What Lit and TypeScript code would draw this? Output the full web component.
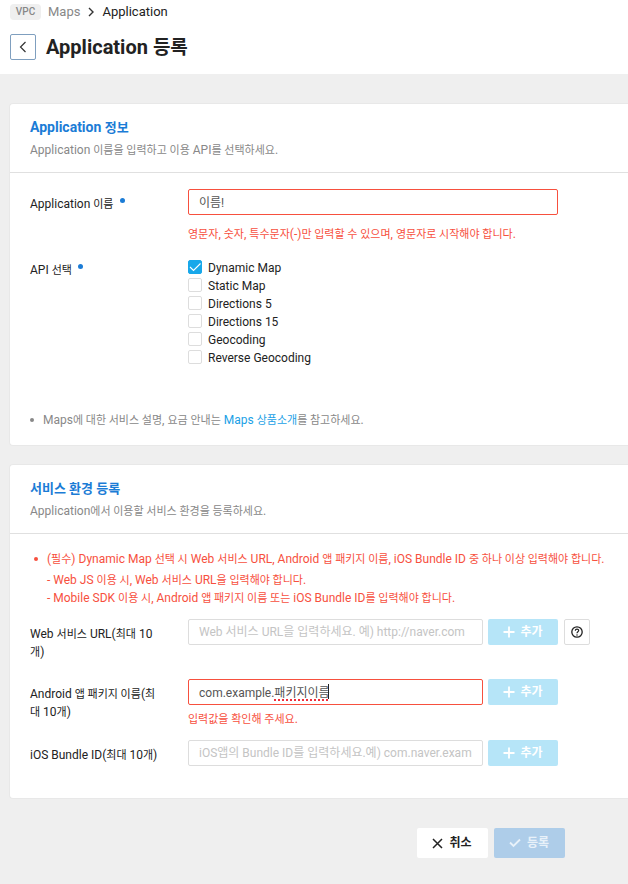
import { LitElement, html, css, svg, nothing } from "lit";
import { customElement, state } from "lit/decorators.js";
import { classMap } from "lit/directives/class-map.js";

interface EnvRow {
  id: string;
  label: string;
  placeholder: string;
  value: string;
  error?: string;
  help?: boolean;
  composing?: boolean;
}

// Hangul is set one step smaller than the Latin text beside it.
const mixed = (text: string) =>
  text
    .split(/([가-힣]+(?: +[가-힣]+)*)/)
    .filter((part) => part !== "")
    .map((part) => (/[가-힣]/.test(part) ? html`<span class="ko">${part}</span>` : part));

const plusIcon = svg`<svg class="icon" width="12" height="12" viewBox="0 0 12 12" aria-hidden="true"><path d="M6 0.5V11.5M0.5 6H11.5" fill="none" stroke="currentColor" stroke-width="1.8"/></svg>`;

@customElement("app-root")
export class AppRoot extends LitElement {
  @state() private apis = [
    { name: "Dynamic Map", checked: true },
    { name: "Static Map", checked: false },
    { name: "Directions 5", checked: false },
    { name: "Directions 15", checked: false },
    { name: "Geocoding", checked: false },
    { name: "Reverse Geocoding", checked: false },
  ];

  private rows: EnvRow[] = [
    {
      id: "web-url",
      label: "Web 서비스 URL(최대 10개)",
      placeholder: "Web 서비스 URL을 입력하세요. 예) http://naver.com",
      value: "",
      help: true,
    },
    {
      id: "android-package",
      label: "Android 앱 패키지 이름(최대 10개)",
      placeholder: "",
      value: "com.example.패키지이름",
      error: "입력값을 확인해 주세요.",
      composing: true,
    },
    {
      id: "ios-bundle",
      label: "iOS Bundle ID(최대 10개)",
      placeholder: "iOS앱의 Bundle ID를 입력하세요.예) com.naver.example",
      value: "",
    },
  ];

  static styles = css`
    :host {
      display: block;
      min-height: 100vh;
      background: #efefef;
      color: #222;
      font-family: Roboto, "Noto Sans CJK KR", sans-serif;
      font-size: 12px;
      line-height: 18px;
    }
    * {
      box-sizing: border-box;
    }
    h1, h2, p, ul {
      margin: 0;
      padding: 0;
    }
    ul {
      list-style: none;
    }
    button, input {
      font: inherit;
    }
    a {
      text-decoration: none;
    }
    .ko {
      font-size: 11px;
      line-height: 1;
    }
    .icon {
      display: block;
      flex: none;
    }
    .header {
      background: #fff;
      padding: 3px 10px 13px;
    }
    .crumbs {
      display: flex;
      align-items: center;
      gap: 7px;
      font-size: 13px;
    }
    .crumbs a {
      color: #888;
    }
    .tag {
      width: 31px;
      height: 16px;
      border-radius: 4px;
      background: #efefef;
      color: #888;
      font-size: 10px;
      font-weight: 500;
      line-height: 16px;
      text-align: center;
    }
    .heading {
      display: flex;
      align-items: center;
      gap: 10px;
      margin-top: 12px;
      height: 28px;
    }
    .heading h1 {
      font-size: 20px;
      line-height: 28px;
      font-weight: 700;
    }
    .heading .ko {
      font-size: 19px;
    }
    .back {
      display: grid;
      place-items: center;
      width: 26px;
      height: 26px;
      padding: 0;
      border: 1px solid #7f9fbf;
      border-radius: 2px;
      background: #fff;
      color: #333;
    }
    .main {
      display: flex;
      flex-direction: column;
      gap: 18px;
      padding: 29px 0 26px 9px;
    }
    .card {
      background: #fff;
      border: 1px solid #e8e8e8;
      border-right: 0;
      border-radius: 4px 0 0 4px;
    }
    .card-head {
      padding: 14px 20px 13px;
      border-bottom: 1px solid #e0e0e0;
    }
    .card-head h2 {
      color: #1b7cd6;
      font-size: 14px;
      line-height: 18px;
      font-weight: 700;
    }
    .card-head h2 .ko {
      font-size: 13px;
    }
    .card-head p {
      margin-top: 5px;
      color: #888;
    }
    .card-body {
      padding: 16px 8px 16px 20px;
    }
    .field {
      display: grid;
      grid-template-columns: 130px minmax(0, 370px);
      column-gap: 28px;
      align-items: start;
    }
    .field-label {
      padding-top: 6px;
    }
    .apis .field-label {
      padding-top: 4px;
    }
    .required::after {
      content: "";
      display: inline-block;
      width: 5px;
      height: 5px;
      margin-left: 6px;
      border-radius: 50%;
      background: #1b7cd6;
      vertical-align: 5px;
    }
    .text {
      display: block;
      width: 100%;
      height: 26px;
      padding: 0 10px 2px;
      border: 1px solid #ddd;
      border-radius: 2px;
      background: #fff;
      color: #555;
      outline: 0;
    }
    .text:placeholder-shown {
      padding-bottom: 0;
    }
    .text::placeholder {
      color: #c4c4c4;
      opacity: 1;
    }
    .text.invalid {
      padding-bottom: 2px;
      border-color: #f7503e;
    }
    .error {
      color: #f7503e;
    }
    .name-error {
      margin-top: 10px;
    }
    .apis {
      margin-top: 14px;
    }
    .api-list {
      padding-top: 2px;
    }
    .api {
      display: flex;
      align-items: center;
      gap: 6px;
      height: 18px;
    }
    .check {
      position: relative;
      display: block;
      width: 14px;
      height: 14px;
      margin-bottom: 2px;
    }
    .check input {
      appearance: none;
      display: block;
      width: 14px;
      height: 14px;
      margin: 0;
      border: 1px solid #ddd;
      border-radius: 2px;
      background: #fff;
    }
    .check input:checked {
      border-color: #18a8ea;
      background: #18a8ea;
    }
    .check svg {
      position: absolute;
      inset: 0;
      pointer-events: none;
      color: #fff;
    }
    .note {
      display: flex;
      margin-top: 44px;
      color: #888;
    }
    .bullet {
      flex: none;
      width: 4px;
      height: 4px;
      margin: 7px 9px 0 0;
      border-radius: 50%;
      background: currentColor;
    }
    .note a {
      color: #1b9fe6;
    }
    .notice {
      display: flex;
      padding-left: 4px;
      color: #f7503e;
    }
    .notice ul {
      margin-top: 3px;
    }
    .envs {
      margin-top: 12px;
    }
    .env {
      display: grid;
      grid-template-columns: 153px minmax(0, 295px) 70px 27px;
      column-gap: 5px;
      align-items: start;
      min-height: 60px;
      padding-bottom: 12px;
    }
    .env:last-child {
      min-height: 42px;
    }
    .env-label {
      max-width: 132px;
      padding-top: 6px;
    }
    .entry {
      position: relative;
    }
    .entry .error {
      margin-top: 5px;
    }
    .composing {
      position: absolute;
      left: 86px;
      top: 5px;
      width: 55px;
      height: 15px;
      border-right: 1px solid #222;
      pointer-events: none;
    }
    .composing::after {
      content: "";
      display: block;
      height: 15px;
      border-bottom: 2px dotted #f0303c;
    }
    .add {
      display: flex;
      align-items: center;
      justify-content: center;
      gap: 5px;
      height: 26px;
      padding: 0;
      border: 0;
      border-radius: 2px;
      background: #b6e5f8;
      color: #fff;
      font-weight: 700;
    }
    .help {
      display: grid;
      place-items: center;
      justify-self: end;
      width: 26px;
      height: 26px;
      padding: 0;
      border: 1px solid #ddd;
      border-radius: 2px;
      background: #fff;
      color: #222;
    }
    .actions {
      display: flex;
      justify-content: center;
      gap: 6px;
      padding: 11px 0 0 344px;
    }
    .action {
      display: flex;
      align-items: center;
      justify-content: center;
      gap: 6px;
      width: 71px;
      height: 30px;
      padding: 0;
      border: 0;
      border-radius: 2px;
      background: #fff;
      color: #222;
      font-weight: 700;
    }
    .primary {
      background: #aecde9;
      color: #e8f1f9;
    }
  `;

  private toggle(index: number) {
    this.apis = this.apis.map((a, i) => (i === index ? { ...a, checked: !a.checked } : a));
  }

  private renderEnv(row: EnvRow) {
    return html`
      <div class="env">
        <label class="env-label" for=${row.id}>${mixed(row.label)}</label>
        <div class="entry">
          <input
            id=${row.id}
            type="text"
            class=${classMap({ text: true, invalid: !!row.error })}
            placeholder=${row.placeholder}
            .value=${row.value}
            spellcheck="false"
          />
          ${row.composing ? html`<span class="composing" aria-hidden="true"></span>` : nothing}
          ${row.error ? html`<p class="error">${mixed(row.error)}</p>` : nothing}
        </div>
        <button class="add" type="button" disabled>${plusIcon}<span>추가</span></button>
        ${row.help
          ? html`<button class="help" type="button" aria-label="도움말">
              <svg class="icon" width="12" height="12" viewBox="0 0 12 12" aria-hidden="true">
                <circle cx="6" cy="6" r="5.2" fill="none" stroke="currentColor" stroke-width="1.3" />
                <path d="M4.3 4.8C4.3 2.5 7.7 2.6 7.7 4.6C7.7 5.8 6 5.9 6 7.3" fill="none" stroke="currentColor" stroke-width="1.2" />
                <circle cx="6" cy="8.9" r="0.75" fill="currentColor" />
              </svg>
            </button>`
          : nothing}
      </div>
    `;
  }

  render() {
    return html`
      <header class="header">
        <nav class="crumbs">
          <span class="tag">VPC</span>
          <a href="#">Maps</a>
          <svg class="icon" width="8" height="10" viewBox="0 0 8 10" aria-hidden="true">
            <path d="M2 1L6 5L2 9" fill="none" stroke="#333" stroke-width="1.4" />
          </svg>
          <span>Application</span>
        </nav>
        <div class="heading">
          <button class="back" type="button" aria-label="뒤로">
            <svg class="icon" width="8" height="12" viewBox="0 0 8 12" aria-hidden="true">
              <path d="M6.5 1L1.5 6L6.5 11" fill="none" stroke="currentColor" stroke-width="1.2" />
            </svg>
          </button>
          <h1>${mixed("Application 등록")}</h1>
        </div>
      </header>
      <main class="main">
        <section class="card">
          <div class="card-head">
            <h2>${mixed("Application 정보")}</h2>
            <p>${mixed("Application 이름을 입력하고 이용 API를 선택하세요.")}</p>
          </div>
          <div class="card-body">
            <div class="field">
              <label class="field-label required" for="app-name">${mixed("Application 이름")}</label>
              <div>
                <input id="app-name" class="text invalid" type="text" .value=${"이름!"} />
                <p class="error name-error">
                  ${mixed("영문자, 숫자, 특수문자(-)만 입력할 수 있으며, 영문자로 시작해야 합니다.")}
                </p>
              </div>
            </div>
            <div class="field apis" role="group" aria-labelledby="api-label">
              <span class="field-label required" id="api-label">${mixed("API 선택")}</span>
              <div class="api-list">
                ${this.apis.map(
                  (api, i) => html`
                    <label class="api">
                      <span class="check">
                        <input type="checkbox" .checked=${api.checked} @change=${() => this.toggle(i)} />
                        ${api.checked
                          ? html`<svg width="14" height="14" viewBox="0 0 14 14" aria-hidden="true">
                              <path d="M2 7L5.5 10.5L12.5 3.5" fill="none" stroke="currentColor" stroke-width="1.1" />
                            </svg>`
                          : nothing}
                      </span>
                      <span>${api.name}</span>
                    </label>
                  `
                )}
              </div>
            </div>
            <div class="note">
              <span class="bullet"></span>
              <p>
                ${mixed("Maps에 대한 서비스 설명, 요금 안내는 ")}<a href="#">${mixed("Maps 상품소개")}</a>${mixed("를 참고하세요.")}
              </p>
            </div>
          </div>
        </section>
        <section class="card">
          <div class="card-head">
            <h2>${mixed("서비스 환경 등록")}</h2>
            <p>${mixed("Application에서 이용할 서비스 환경을 등록하세요.")}</p>
          </div>
          <div class="card-body">
            <div class="notice">
              <span class="bullet"></span>
              <div>
                <p>
                  ${mixed("(필수) Dynamic Map 선택 시 Web 서비스 URL, Android 앱 패키지 이름, iOS Bundle ID 중 하나 이상 입력해야 합니다.")}
                </p>
                <ul>
                  <li>${mixed("- Web JS 이용 시, Web 서비스 URL을 입력해야 합니다.")}</li>
                  <li>${mixed("- Mobile SDK 이용 시, Android 앱 패키지 이름 또는 iOS Bundle ID를 입력해야 합니다.")}</li>
                </ul>
              </div>
            </div>
            <div class="envs">${this.rows.map((row) => this.renderEnv(row))}</div>
          </div>
        </section>
        <div class="actions">
          <button class="action" type="button">
            <svg class="icon" width="11" height="11" viewBox="0 0 11 11" aria-hidden="true">
              <path d="M1 1L10 10M10 1L1 10" fill="none" stroke="currentColor" stroke-width="1.5" />
            </svg>
            <span>취소</span>
          </button>
          <button class="action primary" type="button" disabled>
            <svg class="icon" width="12" height="10" viewBox="0 0 12 10" aria-hidden="true">
              <path d="M1 4.5L4.5 8L11 1.5" fill="none" stroke="currentColor" stroke-width="1.8" />
            </svg>
            <span>등록</span>
          </button>
        </div>
      </main>
    `;
  }
}
